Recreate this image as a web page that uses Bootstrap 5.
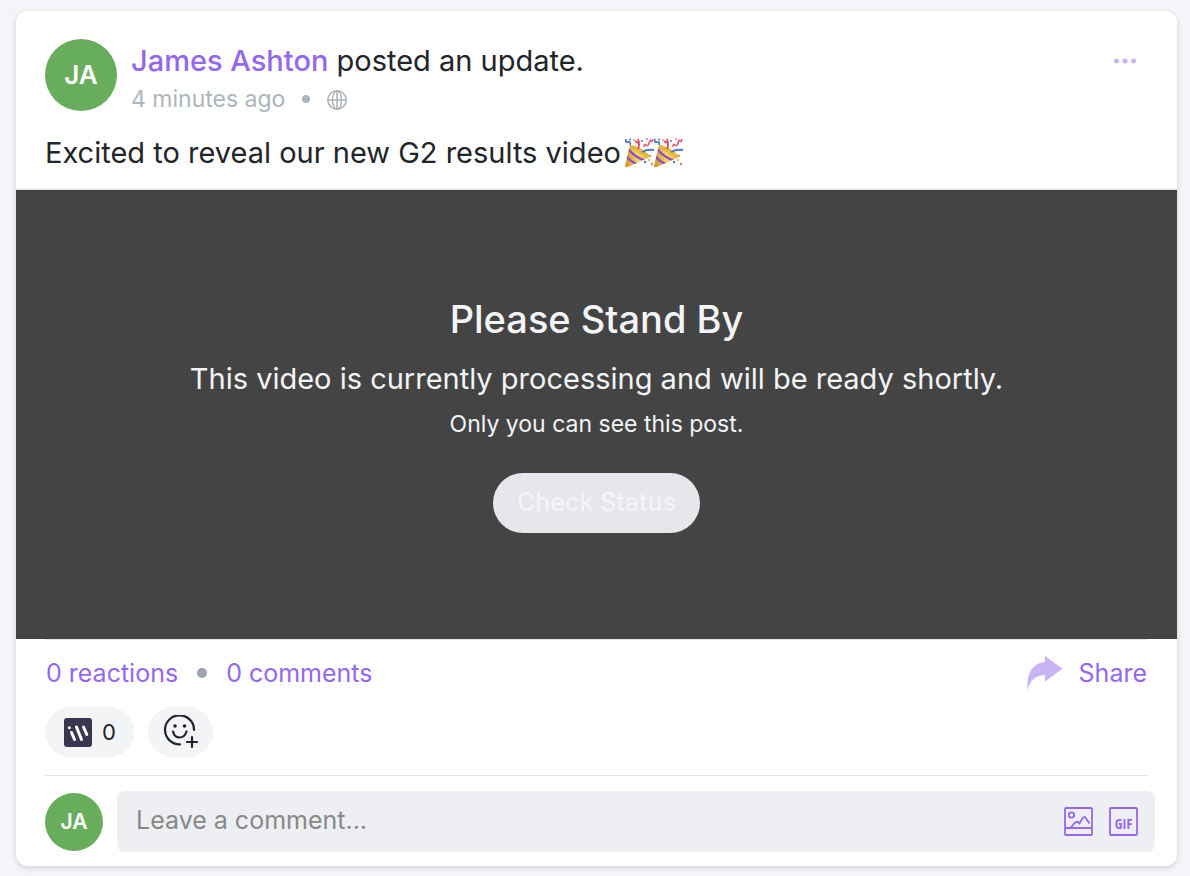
<!DOCTYPE html>
<html lang="en">
<head>
<meta charset="utf-8">
<meta name="viewport" content="width=device-width, initial-scale=1">
<title>Post update</title>
<link href="https://cdn.jsdelivr.net/npm/bootstrap@5.3.0/dist/css/bootstrap.min.css" rel="stylesheet">
<style>
body { background: #f4f5f8; color: #212529; font-family: Inter, "Liberation Sans", sans-serif; font-size: 29px; line-height: 40px; }
a { color: #9468ee; text-decoration: none; }
.page-wrap { padding: 11px 13px 10px 16px; }
.post { border: 0; border-radius: 12px; box-shadow: 0 2px 6px rgba(0,0,0,.14); overflow: hidden; }
.post-head { padding: 28px 29px 16px; border-bottom: 1px solid #dfdde8; }
.post-intro { margin-left: 14px; padding-top: 2px; }
.avatar { width: 72px; height: 72px; background: #68ad5c; color: #fff; font-weight: 600; font-size: 26px; flex: none; }
.avatar-sm { width: 58px; height: 58px; font-size: 21px; }
.author { font-weight: 500; }
.meta { color: #adb5bd; font-size: 23px; line-height: 36px; gap: 17px; }
.post-text { padding-top: 16px; }
.bullet { width: 8px; height: 8px; background: #adb5bd; }
.bullet-lg { width: 10px; height: 10px; background: #9ca3af; margin: 0 19px; }
.bare { border: 0; background: none; padding: 0; line-height: 0; }
.stage { background: #444; color: #f3f4f6; min-height: 449px; padding-bottom: 2px; }
.stage h2 { font-size: 38px; line-height: 48px; font-weight: 500; margin-bottom: 16px; }
.note { font-size: 23px; line-height: 34px; }
.btn-check-status, .btn-check-status:disabled { background: #e5e7eb; color: #f3f4f6; border: 0; border-radius: 30px; height: 60px; padding: 0 24px; font-size: 25px; font-weight: 500; opacity: 1; }
.post-foot { padding: 0 29px 14px; }
.rule { border-top: 1px solid #e2e3e6; }
.counts { font-size: 25px; line-height: 36px; padding: 15px 1px 0; }
.reactions { gap: 14px; padding: 16px 0 18px; }
.pill { height: 50px; border: 0; border-radius: 25px; background: #f3f4f6; color: #212529; font-size: 22px; line-height: 30px; padding: 0 18px 0 19px; gap: 10px; }
.pill + .pill { padding: 0 15px; }
.comment-row { gap: 14px; padding-top: 15px; margin-right: -7px; }
.comment-box { background: #eeeff3; border-radius: 8px; height: 61px; padding: 0 17px 0 19px; }
.comment-box input { border: 0; background: none; padding: 0 0 4px; font-size: 25px; color: #212529; outline: 0; min-width: 0; }
.comment-box input::placeholder { color: #888; }
svg { flex: none; }
</style>
</head>
<body>
<svg width="0" height="0" class="position-absolute" aria-hidden="true">
  <defs>
    <linearGradient id="cone"><stop offset="0" stop-color="#c99524"/><stop offset=".5" stop-color="#f6d662"/><stop offset="1" stop-color="#e3b436"/></linearGradient>
    <clipPath id="coneclip"><path d="M0 28 5 7C12 8 23 15 25 19L3 29Z"/></clipPath>
    <symbol id="popper" viewBox="0 0 29 30">
      <path d="M0 28 5 7C12 8 23 15 25 19L3 29Q0 30 0 28Z" fill="url(#cone)"/>
      <path d="M5 7C12 7 23 14 25 19C18 18 9 13 5 7Z" fill="#e3b840"/>
      <g clip-path="url(#coneclip)" fill="none" stroke="#8d4bd4" stroke-width="2.200"><path d="M3 11Q11 20 19 22M1 18Q6 24 12 26"/></g>
      <path d="M13 11Q15 7 13 1M10 3 13 5" fill="none" stroke="#dc4868" stroke-width="1.800"/>
      <path d="M17 14Q22 11 29 12M1 1Q0 5 3 4T5 7" fill="none" stroke="#447bd8" stroke-width="1.800"/>
      <path d="M19 9Q19 5 21 7T24 5 26 3 28 1" fill="none" stroke="#dc5878" stroke-width="1.500"/>
      <g fill="#477bd3"><circle cx="5" cy="1.500" r="1"/><circle cx="20" cy="24" r="1.200"/><circle cx="17" cy="3" r="1"/></g>
      <g fill="#eb985c"><circle cx="25" cy="18" r="1.200"/><circle cx="24" cy="22" r="1"/><circle cx="9" cy="2" r="1"/></g>
      <g fill="#de7894"><circle cx="27" cy="26" r="1.200"/><circle cx="22" cy="1" r="1"/></g>
    </symbol>
  </defs>
</svg>
<main class="page-wrap">
<article class="card post">
  <header class="post-head">
    <div class="d-flex">
      <div class="avatar rounded-circle d-flex align-items-center justify-content-center">JA</div>
      <div class="post-intro flex-grow-1">
        <div class="pe-2 d-flex align-items-center justify-content-between">
          <div><a href="#" class="author">James Ashton</a> posted an update.</div>
          <button class="bare me-1" aria-label="More options"><svg width="22" height="6" fill="#c8b3f5"><circle cx="2.500" cy="3" r="2.500"/><circle cx="11" cy="3" r="2.500"/><circle cx="19.500" cy="3" r="2.500"/></svg></button>
        </div>
        <div class="meta d-flex align-items-center">
          <span>4 minutes ago</span><span class="bullet rounded-circle"></span>
          <svg width="20" height="22" viewBox="0 0 20 22" fill="none" stroke="#adb5bd" stroke-width="1.600" role="img" aria-label="Public"><circle cx="10" cy="12" r="9.200"/><ellipse cx="10" cy="12" rx="4.500" ry="9.200"/><path d="M10 3V21M1 12H19"/></svg>
        </div>
      </div>
    </div>
    <div class="post-text d-flex align-items-center">
      <span class="me-1">Excited to reveal our new G2 results video</span>
      <svg width="29" height="30" role="img" aria-label="Party popper"><use href="#popper"/></svg><svg width="29" height="30" role="img" aria-label="Party popper"><use href="#popper"/></svg>
    </div>
  </header>
  <section class="stage d-flex flex-column align-items-center justify-content-center text-center">
    <h2>Please Stand By</h2>
    <div>This video is currently processing and will be ready shortly.</div>
    <div class="note mt-2 mb-3">Only you can see this post.</div>
    <button class="btn btn-check-status mt-3" disabled>Check Status</button>
  </section>
  <footer class="post-foot">
    <div class="rule counts d-flex align-items-center">
      <a href="#">0 reactions</a><span class="bullet bullet-lg rounded-circle"></span><a href="#">0 comments</a>
      <a href="#" class="ms-auto d-flex align-items-center"><svg class="me-3" width="36" height="35" viewBox="0 0 36 35" fill="#c8b3f5" aria-hidden="true"><path d="M18 0 35.500 12.700 18 25.500V19C9 19 3 24 .5 34C-1 19 5 7 18 6Z"/></svg>Share</a>
    </div>
    <div class="d-flex reactions">
      <button class="pill d-flex align-items-center"><svg width="28" height="29" viewBox="0 0 28 29" aria-hidden="true"><rect width="28" height="29" rx="3" fill="#39364f"/><g stroke="#fff" stroke-width="3" stroke-linecap="round"><path d="M5.300 9.800H5.400M7.500 14.500 10.500 21.500M12.500 9 17.500 21.500M19.500 9 22.800 16.500"/></g></svg><span>0</span></button>
      <button class="pill" aria-label="Add reaction"><svg width="35" height="34" viewBox="0 0 35 34" fill="none" stroke="#212529" stroke-width="2.200" stroke-linecap="round"><path d="M31 15A14.500 14.500 0 1 0 17 29.300M10 16.500C12 24.500 21 24.500 23.500 16.500"/><path d="M29 22V32M24 27H34"/><g fill="#212529" stroke="none"><circle cx="12" cy="11" r="1.800"/><circle cx="21.500" cy="11" r="1.800"/></g></svg></button>
    </div>
    <div class="rule"></div>
    <div class="comment-row d-flex align-items-center">
      <div class="avatar avatar-sm rounded-circle d-flex align-items-center justify-content-center">JA</div>
      <div class="comment-box d-flex align-items-center flex-grow-1">
        <input class="flex-grow-1" type="text" placeholder="Leave a comment..." aria-label="Leave a comment">
        <button class="bare me-3" aria-label="Add image"><svg width="29" height="29" viewBox="0 0 29 29" fill="none" stroke="#9468ee" stroke-width="1.800"><rect x="1" y="1" width="27" height="27" rx="1"/><circle cx="7.500" cy="8" r="2.700"/><path d="M1 21H28M7 20.500 10.500 16 13.500 14.500 15.500 16.500 19 10.500 21 10 25.500 16.500"/></svg></button>
        <button class="bare" aria-label="Add GIF"><svg width="29" height="29" viewBox="0 0 29 29"><rect x="1" y="1" width="27" height="27" rx="1" fill="none" stroke="#9468ee" stroke-width="1.800"/><text x="14.500" y="22" text-anchor="middle" font-family="'Liberation Sans Narrow', 'Open Sans Condensed', Roboto, sans-serif" font-size="14" font-weight="700" fill="#9468ee">GIF</text></svg></button>
      </div>
    </div>
  </footer>
</article>
</main>
<script src="https://cdn.jsdelivr.net/npm/bootstrap@5.3.0/dist/js/bootstrap.bundle.min.js"></script>
</body>
</html>
